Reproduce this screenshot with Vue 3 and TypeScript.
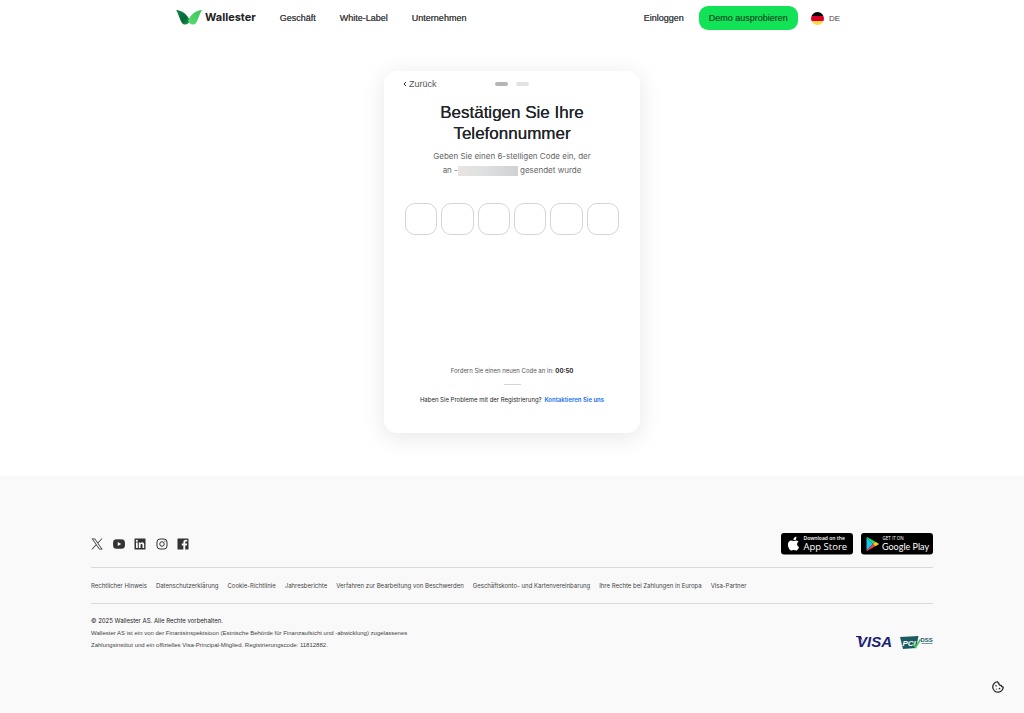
<script setup lang="ts">
import { ref } from 'vue'

const digits = ref<string[]>(['', '', '', '', '', ''])
const nav = ['Geschäft', 'White-Label', 'Unternehmen']
const legal = [
  'Rechtlicher Hinweis',
  'Datenschutzerklärung',
  'Cookie-Richtlinie',
  'Jahresberichte',
  'Verfahren zur Bearbeitung von Beschwerden',
  'Geschäftskonto- und Kartenvereinbarung',
  'Ihre Rechte bei Zahlungen in Europa',
  'Visa-Partner',
]
</script>

<template>
  <div class="page">
    <header class="header">
      <a class="brand" href="#">
        <svg class="brand-mark" viewBox="0 0 52 30" aria-hidden="true">
          <defs>
            <linearGradient id="wing-dark" x1="0" y1="0" x2="1" y2="1">
              <stop offset="0" stop-color="#12864a" />
              <stop offset="0.6" stop-color="#07693a" />
              <stop offset="1" stop-color="#1d9a50" />
            </linearGradient>
            <linearGradient id="wing-light" x1="1" y1="0" x2="0" y2="1">
              <stop offset="0" stop-color="#35c759" />
              <stop offset="1" stop-color="#5bdc6c" />
            </linearGradient>
          </defs>
          <path d="M0 0C12 1 22 8 28 21C26 27 21 30 16 29C8 26 7 10 0 0Z" fill="url(#wing-dark)" />
          <path d="M52 0C40 1 30 8 24 21C26 27 31 30 36 29C44 26 45 10 52 0Z" fill="url(#wing-light)" />
        </svg>
        <span class="brand-name">Wallester</span>
      </a>
      <nav class="nav">
        <a v-for="item in nav" :key="item" href="#">{{ item }}</a>
      </nav>
      <div class="actions">
        <a class="login" href="#">Einloggen</a>
        <button class="demo" type="button">Demo ausprobieren</button>
        <button class="lang" type="button">
          <span class="flag"></span>
          <span>DE</span>
        </button>
      </div>
    </header>

    <main class="main">
      <section class="card">
        <div class="card-top">
          <a class="back" href="#">
            <svg viewBox="0 0 4 6" aria-hidden="true"><path d="M3 1L1 3L3 5" /></svg>
            Zurück
          </a>
          <div class="steps">
            <span class="step current"></span>
            <span class="step"></span>
          </div>
        </div>
        <h1>Bestätigen Sie Ihre Telefonnummer</h1>
        <p class="hint">
          Geben Sie einen 6-stelligen Code ein, der<br />
          an -<span class="redacted"></span> gesendet wurde
        </p>
        <form class="code">
          <input
            v-for="(_, i) in digits"
            :key="i"
            v-model="digits[i]"
            type="text"
            inputmode="numeric"
            maxlength="1"
            :aria-label="`Ziffer ${i + 1}`"
          />
        </form>
        <div class="card-bottom">
          <p class="resend">Fordern Sie einen neuen Code an in: <b>00:50</b></p>
          <hr class="short-rule" />
          <p class="help">Haben Sie Probleme mit der Registrierung? <a href="#">Kontaktieren Sie uns</a></p>
        </div>
      </section>
    </main>

    <footer class="footer">
      <div class="footer-inner">
        <div class="footer-top">
          <div class="social">
            <a href="#" aria-label="X">
              <svg viewBox="0 0 24 24"><path fill="#333" fill-rule="evenodd" d="M1 1h7l5.600 8L21 1h2l-8.500 9.400L23.500 23h-7l-6-8.600L2.800 23H.8l8.800-10zM4 2.600L17.300 21.400H20.500L7.200 2.600z" /></svg>
            </a>
            <a href="#" aria-label="YouTube">
              <svg viewBox="0 0 24 24"><path fill="#333" fill-rule="evenodd" d="M4 3Q12 2 20 3Q24 3.500 24 12T20 21Q12 22 4 21Q0 20.500 0 12T4 3zM9.500 8v8l7-4z" /></svg>
            </a>
            <a href="#" aria-label="LinkedIn">
              <svg viewBox="0 0 24 24"><path fill="#333" fill-rule="evenodd" d="M2 1h20a1 1 0 0 1 1 1v20a1 1 0 0 1-1 1H2a1 1 0 0 1-1-1V2a1 1 0 0 1 1-1zM4 9v11h3.500V9zM5.700 3.600a2 2 0 1 0 .01 0zM9.600 9v11H13V14.500c0-3.400 4-3.300 4 0V20h3.300V13c0-5-5.300-5.300-7.300-2.500V9z" /></svg>
            </a>
            <a href="#" aria-label="Instagram">
              <svg viewBox="0 0 24 24" fill="none" stroke="#333" stroke-width="2"><rect x="2" y="2" width="20" height="20" rx="6" /><circle cx="12" cy="12" r="4.500" /><circle cx="17.800" cy="6.200" r="1.300" fill="#333" stroke="none" /></svg>
            </a>
            <a href="#" aria-label="Facebook">
              <svg viewBox="0 0 24 24"><path fill="#333" d="M2 1h20a1 1 0 0 1 1 1v20a1 1 0 0 1-1 1h-5.500v-8.200h3.200l.5-3.700h-3.700V8.800c0-1.200.4-1.900 1.900-1.900h2V3.600c-5-.7-7.700 1-7.700 4.700v2.800H9.500v3.700h3.200V23H2a1 1 0 0 1-1-1V2a1 1 0 0 1 1-1z" /></svg>
            </a>
          </div>
          <div class="stores">
            <a href="#" aria-label="Download on the App Store">
              <svg class="store" viewBox="0 0 144 44">
                <rect width="144" height="43" rx="6" fill="#000" />
                <g transform="translate(13 7)" fill="#fff">
                  <path d="M16 7C17.500 5.500 18 3 17.500 0C14.500.5 11.500 3.500 12 7C13.500 7.300 15 7 16 7Z" />
                  <path d="M22 10C19 6.500 15 8.500 12.500 9C9 8.500 7 6.800 3.500 9.500C-1.500 14 1.500 24 6 27.500C8.500 29 10 26.800 12.500 26.800S17 29 19 27.500C21 26 22.500 23 23 21C18.500 19 18 13 22 10Z" />
                </g>
                <text class="store-small" x="45" y="14">Download on the</text>
                <text class="store-big" x="45" y="34">App Store</text>
              </svg>
            </a>
            <a href="#" aria-label="Get it on Google Play">
              <svg class="store" viewBox="0 0 144 44">
                <rect width="144" height="43" rx="6" fill="#000" />
                <path d="M11 9V35L24 22Z" fill="#18c5ee" />
                <path d="M11 9L24 22L28.500 17.500L14 9Q12 8 11 9Z" fill="#18df77" />
                <path d="M11 35L24 22L28.500 26.500L14 35Q12 36 11 35Z" fill="#f23c4e" />
                <path d="M24 22L28.500 17.500L35 21Q36 22 35 23L28.500 26.500Z" fill="#ffce14" />
                <text class="store-caps" x="43" y="14">GET IT ON</text>
                <text class="store-google" x="42" y="33">Google Play</text>
              </svg>
            </a>
          </div>
        </div>
        <nav class="legal">
          <a v-for="item in legal" :key="item" href="#">{{ item }}</a>
        </nav>
        <div class="footer-bottom">
          <div class="copy">
            <p class="rights">© 2025 Wallester AS. Alle Rechte vorbehalten.</p>
            <p class="licence">
              Wallester AS ist ein von der Finantsinspektsioon (Estnische Behörde für Finanzaufsicht und -abwicklung) zugelassenes<br />
              Zahlungsinstitut und ein offizielles Visa-Principal-Mitglied. Registrierungscode: 11812882.
            </p>
          </div>
          <div class="badges">
            <svg class="visa" viewBox="0 0 38 18" role="img" aria-label="Visa">
              <path d="M1 3H6L8 9Q6 4 1 4Z" fill="#1a1f71" />
              <text x="2" y="14">VISA</text>
            </svg>
            <svg class="pci" viewBox="0 0 66 30" role="img" aria-label="PCI DSS">
              <path d="M0 4L37 2L32 26L6 28Z" fill="#1c5a60" />
              <text class="pci-text" x="5" y="22">PCI</text>
              <path d="M26 18L31 25L41 9" fill="none" stroke="#35c95c" stroke-width="3" />
              <text class="dss-text" x="41" y="13">DSS</text>
              <path d="M43 17H65" stroke="#1c5a60" stroke-width="2" opacity="0.6" />
            </svg>
          </div>
        </div>
      </div>
    </footer>

    <button class="cookie" type="button" aria-label="Cookie-Einstellungen">
      <svg viewBox="0 0 24 24" fill="none" stroke="#222" stroke-width="2.500" stroke-linejoin="round">
        <path d="M11 1.500A10.500 10.500 0 1 0 22.500 12C20 12 18.500 11 18.500 8.500C15 9 13 7 14 4.500C12.500 4 11.500 3 11 1.500Z" />
        <g fill="#222" stroke="none"><circle cx="8" cy="9.500" r="1.600" /><circle cx="9" cy="16" r="1.200" /><circle cx="15" cy="15" r="1.700" /></g>
      </svg>
    </button>
  </div>
</template>

<style>
body {
  margin: 0;
  background: #fff;
}
</style>

<style scoped>
.page {
  min-height: 100vh;
  display: flex;
  flex-direction: column;
  font-family: "Liberation Sans", Arial, sans-serif;
  font-size: 9px;
  color: #212529;
}
a {
  color: inherit;
  text-decoration: none;
}
button {
  font: inherit;
  color: inherit;
  border: 0;
  padding: 0;
  background: none;
  cursor: pointer;
}
p,
h1 {
  margin: 0;
}
svg {
  display: block;
}
.header {
  box-sizing: border-box;
  width: 100%;
  max-width: 672px;
  height: 36px;
  margin: 0 auto;
  padding-right: 8px;
  display: flex;
  align-items: center;
  color: #444;
  text-shadow: 0 0 currentColor;
}
.brand {
  display: flex;
  align-items: center;
  gap: 3px;
  padding-bottom: 2px;
}
.brand-mark {
  width: 26px;
  height: 15px;
}
.brand-name {
  font-family: Inter, "Liberation Sans", sans-serif;
  font-weight: 700;
  font-size: 11px;
  color: #222;
  text-shadow: none;
}
.nav {
  display: flex;
  gap: 24px;
  margin-left: 24px;
}
.actions {
  margin-left: auto;
  display: flex;
  align-items: center;
}
.demo {
  height: 24px;
  padding: 0 10px;
  margin: 0 13px 0 15px;
  border-radius: 9px;
  background: #12e356;
  color: #14642d;
  text-shadow: 0 0 currentColor;
}
.lang {
  display: flex;
  align-items: center;
  gap: 5px;
  font-size: 8px;
  text-shadow: none;
}
.flag {
  width: 13px;
  height: 13px;
  border-radius: 50%;
  background: linear-gradient(#000 34%, #d80027 34% 66%, #ffda44 66%);
}
.main {
  display: flex;
  justify-content: center;
  padding: 35px 16px 43px;
}
.card {
  box-sizing: border-box;
  width: 100%;
  max-width: 256px;
  min-height: 362px;
  padding: 7px 21px 28px;
  border-radius: 13px;
  background: #fff;
  box-shadow: 0 4px 24px rgba(0, 0, 0, 0.1);
  display: flex;
  flex-direction: column;
  text-align: center;
}
.card-top {
  display: grid;
  grid-template-columns: 1fr auto 1fr;
  align-items: center;
  height: 12px;
}
.back {
  display: flex;
  align-items: center;
  gap: 2px;
  margin-left: -2px;
  color: #555;
}
.back svg {
  width: 4px;
  height: 6px;
  fill: none;
  stroke: #333;
}
.steps {
  display: flex;
  gap: 8px;
}
.step {
  width: 13px;
  height: 4px;
  border-radius: 2px;
  background: #e2e2e2;
}
.step.current {
  background: #b5b5b5;
}
h1 {
  margin: 12px 16px 0;
  font-size: 17px;
  line-height: 21px;
  font-weight: 400;
  text-shadow: 0 0 currentColor;
}
.hint {
  margin-top: 5px;
  font-family: Inter, "Liberation Sans", sans-serif;
  font-size: 8px;
  line-height: 14px;
  color: #666;
}
.redacted {
  display: inline-block;
  width: 60px;
  height: 10px;
  vertical-align: middle;
  background: linear-gradient(90deg, #e9e3e0, #dfe1e2 40%, #cfd1d2);
}
.code {
  display: grid;
  grid-template-columns: repeat(6, 1fr);
  gap: 4px;
  margin-top: 26px;
}
.code input {
  box-sizing: border-box;
  width: 100%;
  height: 32px;
  padding: 0;
  border: 1px solid #d5d5d5;
  border-radius: 10px;
  background: #fff;
  font: inherit;
  font-size: 14px;
  text-align: center;
}
.card-bottom {
  margin-top: auto;
  font-family: Inter, "Liberation Sans", sans-serif;
  font-size: 6px;
  line-height: 10px;
}
.resend {
  color: #555;
}
.resend b {
  color: #222;
}
.short-rule {
  width: 17px;
  height: 1px;
  margin: 8px auto 10px;
  border: 0;
  background: #d5d5d5;
}
.help a {
  margin-left: 1px;
  color: #1570ef;
  font-weight: 600;
}
.footer {
  flex: 1;
  padding: 0 16px;
  background: #f9f9f9;
  font-family: Inter, "Liberation Sans", sans-serif;
  font-size: 6px;
  color: #444;
}
.footer-inner {
  max-width: 842px;
  margin: 0 auto;
  padding-top: 57px;
}
.footer-top {
  display: flex;
  justify-content: space-between;
  align-items: center;
  padding-bottom: 12px;
  border-bottom: 1px solid #d9d9d9;
}
.social {
  display: flex;
  justify-content: space-between;
  width: 98px;
}
.social svg {
  width: 12px;
  height: 12px;
}
.stores {
  display: flex;
  gap: 8px;
}
.store {
  width: 72px;
  height: 22px;
}
.store text {
  fill: #fff;
  font-family: "Open Sans", sans-serif;
}
.store .store-small {
  font-size: 10px;
  font-weight: 600;
}
.store .store-big {
  font-size: 19px;
  font-weight: 500;
}
.store .store-caps {
  font-size: 9px;
}
.store .store-google {
  font-family: Lato, sans-serif;
  font-size: 18px;
  font-weight: 400;
}
.legal {
  display: flex;
  flex-wrap: wrap;
  gap: 9px;
  padding: 12px 0;
  line-height: 11px;
  border-bottom: 1px solid #d9d9d9;
}
.footer-bottom {
  display: flex;
  justify-content: space-between;
  align-items: flex-end;
  padding-top: 11px;
  line-height: 12px;
}
.rights {
  color: #222;
}
.licence {
  font-family: "Liberation Sans", Arial, sans-serif;
}
.badges {
  display: flex;
  align-items: center;
  gap: 7px;
}
.visa {
  width: 38px;
  height: 18px;
}
.visa text {
  fill: #1a1f71;
  font-family: "Liberation Sans", Arial, sans-serif;
  font-size: 15px;
  font-weight: 700;
  font-style: italic;
}
.pci {
  width: 33px;
  height: 15px;
}
.pci-text {
  fill: #fff;
  font-family: "Liberation Sans", Arial, sans-serif;
  font-size: 16px;
  font-weight: 700;
  font-style: italic;
}
.dss-text {
  fill: #1c5a60;
  font-family: "Liberation Sans", Arial, sans-serif;
  font-size: 12px;
  font-weight: 700;
}
.cookie {
  position: fixed;
  right: 20px;
  bottom: 20px;
}
.cookie svg {
  width: 12px;
  height: 12px;
}
</style>
